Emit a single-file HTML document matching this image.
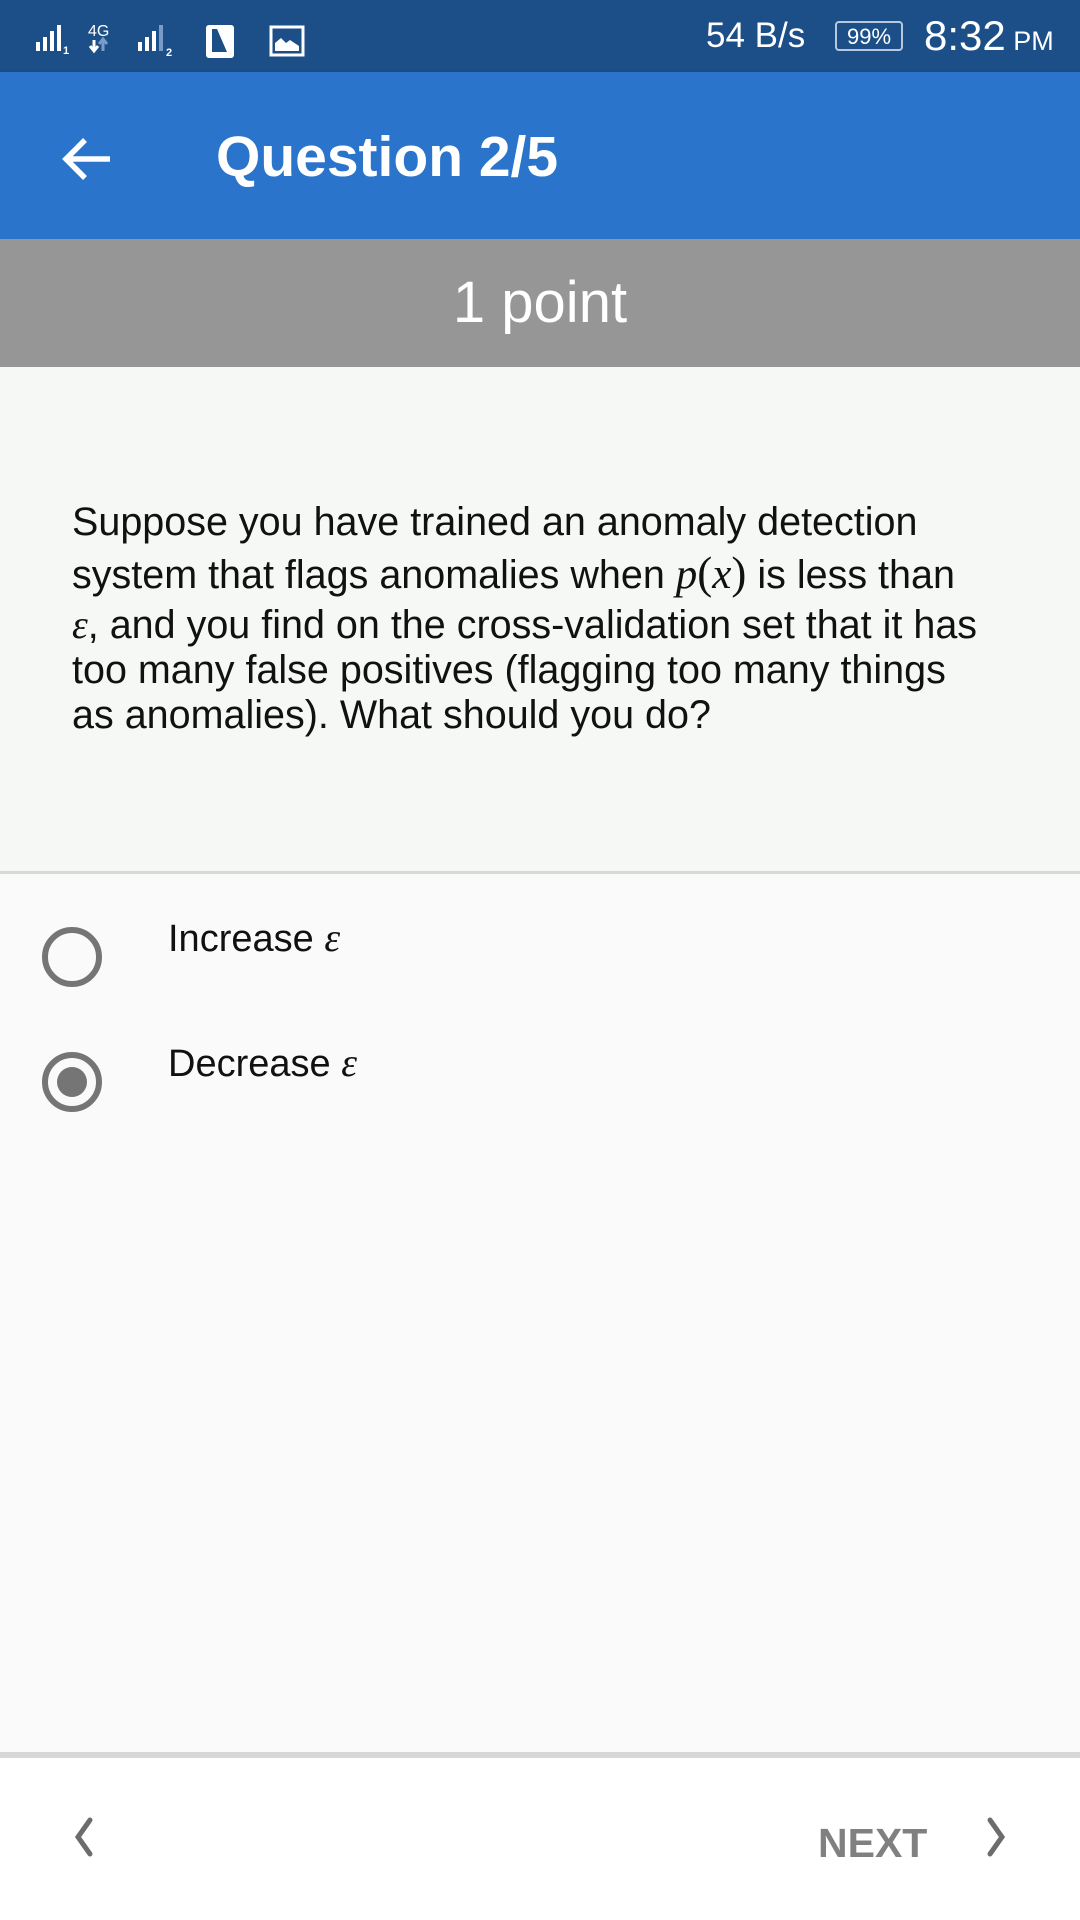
<!DOCTYPE html>
<html><head><meta charset="utf-8"><style>
*{margin:0;padding:0;box-sizing:border-box}
body{width:1080px;height:1920px;overflow:hidden;background:#fafafa;font-family:"Liberation Sans",sans-serif;position:relative}
.abs{position:absolute}
#status{left:0;top:0;width:1080px;height:72px;background:#1c4e88;color:#fff}
#bar{left:0;top:72px;width:1080px;height:167px;background:#2a74cb;box-shadow:0 3px 6px rgba(0,0,0,.3)}
#pt{left:0;top:239px;width:1080px;height:128px;background:#969696;color:#fff;font-size:58px;text-align:center;line-height:128px}
#q{left:0;top:367px;width:1080px;height:507px;background:#f6f8f5;border-bottom:3px solid #d8d8d8}
.ql{position:absolute;left:72px;font-size:39.5px;color:#111;white-space:nowrap}
.m{font-family:"Liberation Serif",serif;font-style:italic;font-size:43px}
.radio{width:60px;height:60px;border:6px solid #757575;border-radius:50%}
.opt{font-size:38px;color:#111;white-space:nowrap}
#bot{left:0;top:1752px;width:1080px;height:168px;background:#fff;border-top:6px solid #d7d7d7}
</style></head><body>
<div id="status" class="abs">
 <svg class="abs" style="left:36px;top:22px" width="280" height="36">
  <g fill="#fff"><rect x="0" y="20" width="4" height="9"/><rect x="7" y="15" width="4" height="14"/><rect x="14" y="9" width="4" height="20"/><rect x="21" y="3" width="4" height="26"/>
  <text x="27" y="32" font-size="11" font-family="Liberation Sans" font-weight="bold">1</text>
  <text x="52" y="14" font-size="16" font-family="Liberation Sans">4G</text>
  <path d="M58 18v10M54 24l4 5 4-5" stroke="#fff" stroke-width="3" fill="none"/>
  <path d="M67 29v-10M63 22l4-5 4 5" stroke="#7a9cc8" stroke-width="3" fill="none"/>
  <rect x="102" y="20" width="4" height="9"/><rect x="109" y="15" width="4" height="14"/><rect x="116" y="9" width="4" height="20"/><rect x="123" y="3" width="4" height="26" fill="#7a9cc8"/>
  <text x="130" y="34" font-size="11" font-family="Liberation Sans" font-weight="bold">2</text>
  <rect x="170" y="3" width="28" height="33" rx="3"/><path d="M176 7h5l10 23h-15z" fill="#1c4e88"/>
  <rect x="235" y="5" width="32" height="28" fill="none" stroke="#fff" stroke-width="3"/><path d="M239 29v-8l6-5 5 5 4-3 9 6v5z"/></g>
 </svg>
 <div class="abs" style="left:706px;top:16px;font-size:35px">54 B/s</div>
 <div class="abs" style="left:835px;top:21px;width:68px;height:30px;border:2px solid #b8c8de;border-radius:4px;font-size:22px;text-align:center;line-height:27px">99%</div>
 <div class="abs" style="left:924px;top:12px;font-size:42px">8:32<span style="font-size:27px"> PM</span></div>
</div>
<div id="bar" class="abs">
 <svg class="abs" style="left:58px;top:60px" width="56" height="56"><path d="M52 27H8M27 8L8 27l19 19" stroke="#fff" stroke-width="5.5" fill="none"/></svg>
 <div class="abs" style="left:216px;top:52px;font-size:57px;color:#fff;font-weight:bold">Question 2/5</div>
</div>
<div id="pt" class="abs">1 point</div>
<div id="q" class="abs">
 <div class="ql" style="top:133px">Suppose you have trained an anomaly detection</div>
 <div class="ql" style="top:180px">system that flags anomalies when <span class="m">p</span><span style="font-family:'Liberation Serif';font-size:45px">(</span><span class="m">x</span><span style="font-family:'Liberation Serif';font-size:45px">)</span> is less than</div>
 <div class="ql" style="top:234px"><span class="m" style="font-size:40px">ε</span>, and you find on the cross-validation set that it has</div>
 <div class="ql" style="top:281px">too many false positives (flagging too many things</div>
 <div class="ql" style="top:326px">as anomalies). What should you do?</div>
</div>
<div class="abs radio" style="left:42px;top:927px"></div>
<div class="abs opt" style="left:168px;top:914px">Increase <span class="m" style="font-size:40px">ε</span></div>
<div class="abs radio" style="left:42px;top:1052px"><div style="position:absolute;left:9px;top:9px;width:30px;height:30px;border-radius:50%;background:#757575"></div></div>
<div class="abs opt" style="left:168px;top:1039px">Decrease <span class="m" style="font-size:40px">ε</span></div>
<div id="bot" class="abs">
 <svg class="abs" style="left:68px;top:56px" width="30" height="46"><path d="M22 6L10 23l12 17" stroke="#6c6c6c" stroke-width="5" fill="none" stroke-linecap="round"/></svg>
 <div class="abs" style="left:818px;top:62px;font-size:41px;font-weight:bold;color:#808080">NEXT</div>
 <svg class="abs" style="left:982px;top:56px" width="30" height="46"><path d="M8 6l12 17L8 40" stroke="#6c6c6c" stroke-width="5" fill="none" stroke-linecap="round"/></svg>
</div>
</body></html>
